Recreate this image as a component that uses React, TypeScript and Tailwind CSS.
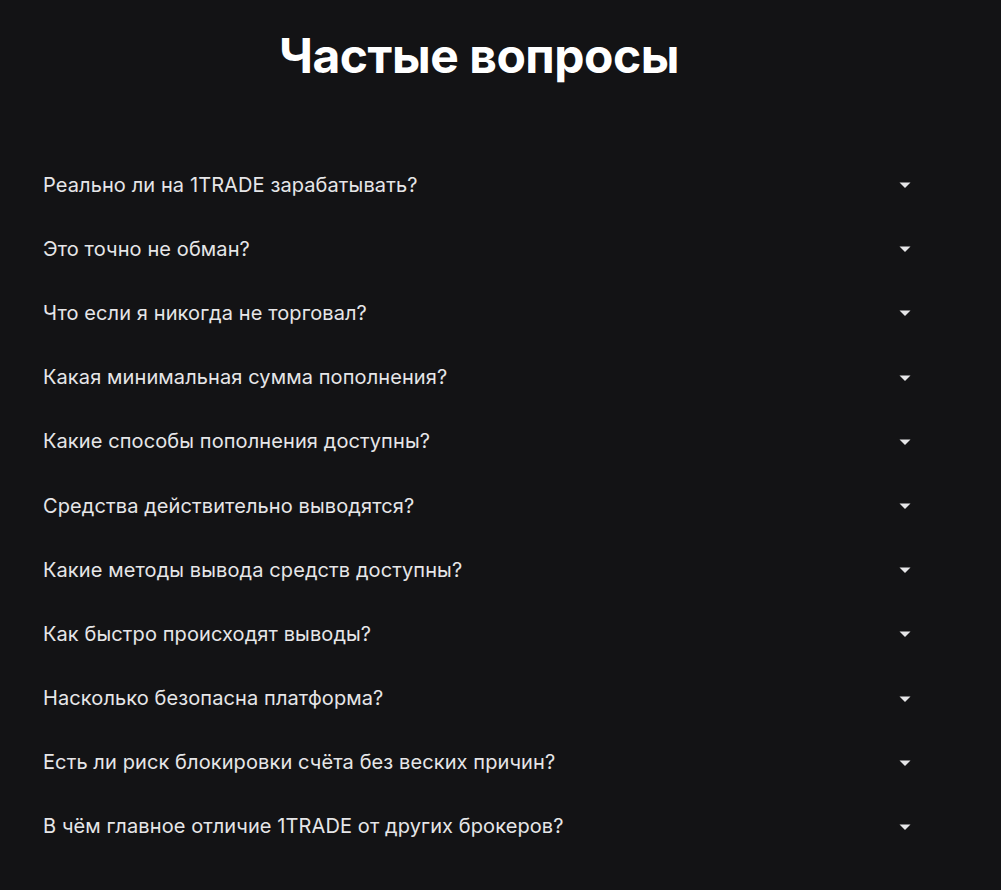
import React from "react";

const questions = [
  "Реально ли на 1TRADE зарабатывать?",
  "Это точно не обман?",
  "Что если я никогда не торговал?",
  "Какая минимальная сумма пополнения?",
  "Какие способы пополнения доступны?",
  "Средства действительно выводятся?",
  "Какие методы вывода средств доступны?",
  "Как быстро происходят выводы?",
  "Насколько безопасна платформа?",
  "Есть ли риск блокировки счёта без веских причин?",
  "В чём главное отличие 1TRADE от других брокеров?",
];

export default function App() {
  return (
    <div
      className="min-h-[890px] w-full bg-[#131315] text-[#e6e6e8]"
      style={{ fontFamily: "Inter, 'Noto Sans', sans-serif" }}
    >
      <div className="ml-[43px] w-[872px] pt-[32px] pb-[31px]">
        <h2 className="text-center text-[48px] leading-[48px] font-bold text-white tracking-[-0.01em]">
          Частые вопросы
        </h2>
        <div className="mt-[72px] flex flex-col">
          {questions.map((q) => (
            <button
              key={q}
              className="flex h-[64.2px] w-full items-center justify-between text-left"
            >
              <span className="text-[20px] leading-[30px] pt-[1px] tracking-[0.1px]">{q}</span>
              <svg
                width="12"
                height="6"
                viewBox="0 0 12 6"
                className="mr-[4px] mt-[2px] shrink-0"
              >
                <path d="M0.5 0.5 L11.5 0.5 L6 6 Z" fill="#e6e6e8" />
              </svg>
            </button>
          ))}
        </div>
      </div>
    </div>
  );
}
